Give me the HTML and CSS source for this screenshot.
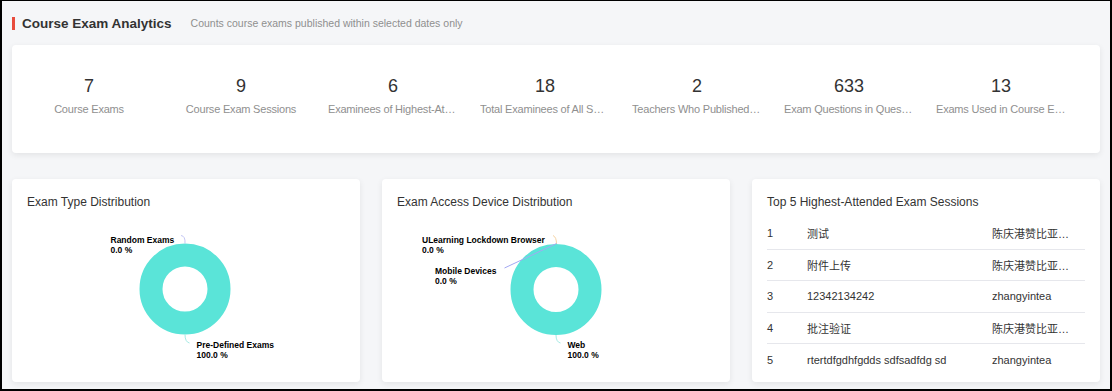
FILE: index.html
```html
<!DOCTYPE html>
<html lang="en">

<head>
    <meta charset="UTF-8">
    <meta name="viewport" content="width=device-width, initial-scale=1.0">
    <title>Course Exam Analytics</title>
    <link rel="stylesheet" href="styles.css">
</head>

<body>

    <div class="page">
        <header class="page-head">
            <span class="head-mark"></span>
            <h1>Course Exam Analytics</h1>
            <span class="head-note">Counts course exams published within selected dates only</span>
        </header>

        <section class="stats">
            <div class="stat">
                <div class="stat-value">7</div>
                <div class="stat-label">Course Exams</div>
            </div>
            <div class="stat">
                <div class="stat-value">9</div>
                <div class="stat-label">Course Exam Sessions</div>
            </div>
            <div class="stat">
                <div class="stat-value">6</div>
                <div class="stat-label">Examinees of Highest-Attended Exam Session</div>
            </div>
            <div class="stat">
                <div class="stat-value">18</div>
                <div class="stat-label">Total Examinees of All Sessions</div>
            </div>
            <div class="stat">
                <div class="stat-value">2</div>
                <div class="stat-label">Teachers Who Published Exams</div>
            </div>
            <div class="stat">
                <div class="stat-value">633</div>
                <div class="stat-label">Exam Questions in Question Bank</div>
            </div>
            <div class="stat">
                <div class="stat-value">13</div>
                <div class="stat-label">Exams Used in Course Exam Sessions</div>
            </div>
        </section>

        <section class="panels">
            <div class="panel">
                <h2>Exam Type Distribution</h2>
                <svg class="chart" viewBox="0 0 348 157" width="348" height="157">
                    <circle cx="173" cy="79" r="34" class="donut"></circle>
                    <path d="M173 33.5 Q173.5 26 169 25.5" class="leader leader-lilac"></path>
                    <path d="M173 124.5 Q173 132 177.5 133" class="leader leader-mint"></path>
                    <text x="98.5" y="32.5" class="chart-label">Random Exams</text>
                    <text x="98.5" y="42.5" class="chart-label">0.0 %</text>
                    <text x="184.5" y="137.5" class="chart-label">Pre-Defined Exams</text>
                    <text x="184.5" y="147.5" class="chart-label">100.0 %</text>
                </svg>
            </div>

            <div class="panel">
                <h2>Exam Access Device Distribution</h2>
                <svg class="chart" viewBox="0 0 348 157" width="348" height="157">
                    <circle cx="174" cy="79.5" r="34" class="donut"></circle>
                    <path d="M171 25.5 Q174.5 27 174.5 34" class="leader leader-peach"></path>
                    <path d="M122.5 58 L174.5 33.5" class="leader leader-blue"></path>
                    <path d="M174 125 Q174 132 178.5 133" class="leader leader-mint"></path>
                    <text x="40" y="32.5" class="chart-label">ULearning Lockdown Browser</text>
                    <text x="40" y="42.5" class="chart-label">0.0 %</text>
                    <text x="53" y="64" class="chart-label">Mobile Devices</text>
                    <text x="53" y="74" class="chart-label">0.0 %</text>
                    <text x="185.5" y="137.5" class="chart-label">Web</text>
                    <text x="185.5" y="147.5" class="chart-label">100.0 %</text>
                </svg>
            </div>

            <div class="panel">
                <h2>Top 5 Highest-Attended Exam Sessions</h2>
                <div class="rank-list">
                    <div class="rank-row">
                        <span class="rank-no">1</span>
                        <span class="rank-name">测试</span>
                        <span class="rank-teacher">陈庆港赞比亚老师</span>
                    </div>
                    <div class="rank-row">
                        <span class="rank-no">2</span>
                        <span class="rank-name">附件上传</span>
                        <span class="rank-teacher">陈庆港赞比亚老师</span>
                    </div>
                    <div class="rank-row">
                        <span class="rank-no">3</span>
                        <span class="rank-name">12342134242</span>
                        <span class="rank-teacher">zhangyintea</span>
                    </div>
                    <div class="rank-row">
                        <span class="rank-no">4</span>
                        <span class="rank-name">批注验证</span>
                        <span class="rank-teacher">陈庆港赞比亚老师</span>
                    </div>
                    <div class="rank-row">
                        <span class="rank-no">5</span>
                        <span class="rank-name">rtertdfgdhfgdds sdfsadfdg sd</span>
                        <span class="rank-teacher">zhangyintea</span>
                    </div>
                </div>
            </div>
        </section>
    </div>

</body>

</html>
```

FILE: styles.css
```css
:root {
    --color-text: #333333;
    --color-text-muted: #8f8f8f;
    --color-background: #f5f6f8;
    --color-surface: #ffffff;
    --color-border: #e6e7ec;
    --color-accent: #e84c3d;
    --color-donut: #5ae4d8;
    --box-shadow: 0 2px 6px rgba(0, 0, 0, 0.08);
    --font-family: "Liberation Sans", Arial, "Noto Sans CJK SC", sans-serif;
    --border-radius: 4px;
}

html,
body {
    height: 100%;
}

body {
    font-family: var(--font-family);
    background-color: var(--color-background);
    color: var(--color-text);
    margin: 0;
    box-sizing: border-box;
    border: 2px solid #000;
    border-top-width: 1px;
    overflow: hidden;
}

.page {
    padding: 0 10px;
}

/* header */
.page-head {
    height: 44px;
    display: flex;
    align-items: center;
}

.head-mark {
    width: 3px;
    height: 13px;
    background: var(--color-accent);
    margin-right: 7px;
}

h1 {
    margin: 0 19px 0 0;
    font-size: 13.5px;
    font-weight: bold;
    color: var(--color-text);
}

.head-note {
    font-size: 10.5px;
    color: var(--color-text-muted);
}

/* stat strip */
.stats {
    display: grid;
    grid-template-columns: repeat(7, 152px);
    padding: 30px 0 37px 1px;
    background: var(--color-surface);
    border-radius: var(--border-radius);
    box-shadow: var(--box-shadow);
}

.stat {
    text-align: center;
}

.stat-value {
    font-size: 18px;
    line-height: 22px;
    color: var(--color-text);
}

.stat-label {
    max-width: 130px;
    margin: 5px auto 0;
    font-size: 11px;
    line-height: 14px;
    letter-spacing: -0.2px;
    color: var(--color-text-muted);
    white-space: nowrap;
    overflow: hidden;
    text-overflow: ellipsis;
}

/* bottom panels */
.panels {
    display: grid;
    grid-template-columns: repeat(3, 1fr);
    gap: 22px;
    margin-top: 26px;
}

.panel {
    height: 203px;
    box-sizing: border-box;
    padding: 15px 15px 0;
    background: var(--color-surface);
    border-radius: var(--border-radius);
    box-shadow: var(--box-shadow);
    overflow: hidden;
}

h2 {
    margin: 0;
    font-size: 12px;
    line-height: 16px;
    font-weight: normal;
    color: var(--color-text);
}

.chart {
    display: block;
    margin: 0 -15px;
}

.donut {
    fill: none;
    stroke: var(--color-donut);
    stroke-width: 23;
}

.leader {
    fill: none;
    stroke-width: 1;
}

.leader-lilac {
    stroke: #c4c7f4;
}

.leader-mint {
    stroke: #a6ebe5;
}

.leader-peach {
    stroke: #f6d3a4;
}

.leader-blue {
    stroke: #a3a8f2;
}

.chart-label {
    font-family: "Liberation Sans", Arial, sans-serif;
    font-size: 8.5px;
    font-weight: bold;
    fill: #000;
}

/* ranking list */
.rank-list {
    margin-top: 8px;
}

.rank-row {
    display: flex;
    align-items: center;
    height: 30.6px;
    border-bottom: 1px solid var(--color-border);
    font-size: 11px;
    color: var(--color-text);
}

.rank-row:last-child {
    border-bottom: none;
}

.rank-no {
    width: 40px;
}

.rank-name {
    width: 185px;
    white-space: nowrap;
    overflow: hidden;
    text-overflow: ellipsis;
}

.rank-teacher {
    width: 80px;
    white-space: nowrap;
    overflow: hidden;
    text-overflow: ellipsis;
}
```
